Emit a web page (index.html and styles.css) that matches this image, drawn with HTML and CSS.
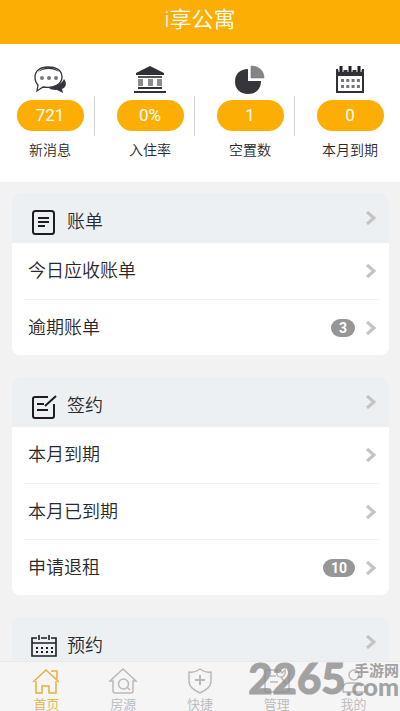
FILE: index.html
```html
<!DOCTYPE html>
<html lang="zh-CN">
<head>
<meta charset="utf-8">
<meta name="viewport" content="width=device-width, initial-scale=1">
<title>i享公寓</title>
<link rel="stylesheet" href="styles.css">
</head>
<body>
<svg class="defs" aria-hidden="true">
  <symbol id="chevron" viewBox="0 0 12 16"><path d="M2 2l7 6-7 6" fill="none" stroke="#c4c4c4" stroke-width="3"/></symbol>
</svg>
<div class="app">
  <header class="topbar"><h1>i享公寓</h1></header>
  <main class="content">
    <section class="stats">
      <a class="stat" href="#messages">
        <svg class="stat-icon" viewBox="0 0 34 30">
          <path d="M31 15c4 5 1 9-2 10l1 4-6-3c-5 0-8-1-10-4 8 1 15-2 17-7z" fill="#35353b"/>
          <path d="M15 3C7 3 2 7 2 13c0 4 1 6 3 8l-1 6 6-4c11 2 19-3 19-10S23 3 15 3z" fill="#fff" stroke="#35353b" stroke-width="1.3"/>
          <path d="M5 8c5-6 17-6 21 0-6-4-15-4-21 0z" fill="#35353b"/>
          <g fill="#77777b"><circle cx="9" cy="14" r="2"/><circle cx="16" cy="14" r="2"/><circle cx="23" cy="14" r="2"/></g>
        </svg>
        <span class="pill">721</span><span class="stat-label">新消息</span>
      </a>
      <a class="stat" href="#occupancy">
        <svg class="stat-icon" viewBox="0 0 34 30">
          <path d="M17 2l14 7v2H3V9zM5 23h24v2H5zM1 27h32v2H1z" fill="#303036"/>
          <path d="M5 12h24v2H5z" fill="#55555a"/>
          <path d="M5 15h5v7H5zM15 15h5v7h-5zM24 15h5v7h-5z" fill="#8b8b8e"/>
        </svg>
        <span class="pill">0%</span><span class="stat-label">入住率</span>
      </a>
      <a class="stat" href="#vacant">
        <svg class="stat-icon" viewBox="0 0 34 30">
          <path d="M15 5v12h13c0 8-5 13-13 13C7 30 2 25 2 17.500S7 5 15 5z" fill="#35353b"/>
          <path d="M18 2c8 0 13 5 13 12H18z" fill="#858587" stroke="#68686b" stroke-width=".5"/>
        </svg>
        <span class="pill">1</span><span class="stat-label">空置数</span>
      </a>
      <a class="stat" href="#due">
        <svg class="stat-icon" viewBox="0 0 34 30">
          <path d="M3 5h28v24H3z" fill="#303036"/><path d="M5 12h24v15H5z" fill="#fff"/>
          <path d="M5 3h24v3H5z" fill="#fff"/>
          <path d="M8 2v6M17 2v6M26 2v6" stroke="#fff" stroke-width="5"/>
          <path d="M8 2v6M17 2v6M26 2v6" stroke="#202025" stroke-width="3"/>
          <path d="M8 16.500h19M8 22.500h19" stroke="#77777b" stroke-width="3" stroke-dasharray="3 2.300"/>
        </svg>
        <span class="pill">0</span><span class="stat-label">本月到期</span>
      </a>
    </section>

    <div class="cards">
      <section class="card">
        <a class="card-head" href="#bills">
          <svg class="head-icon" viewBox="0 0 26 26" fill="none" stroke="#1d1d20" stroke-width="2"><rect x="2" y="2" width="21" height="23" rx="2.500"/><path d="M7 9h11M7 13h11M7 17h7"/></svg>
          <h2>账单</h2>
          <svg class="chevron"><use href="#chevron"/></svg>
        </a>
        <ul class="rows">
          <li><a class="row" href="#today">今日应收账单<svg class="chevron"><use href="#chevron"/></svg></a></li>
          <li><a class="row" href="#overdue">逾期账单<span class="badge">3</span><svg class="chevron"><use href="#chevron"/></svg></a></li>
        </ul>
      </section>
      <section class="card">
        <a class="card-head" href="#contracts">
          <svg class="head-icon" viewBox="0 0 26 26" fill="none" stroke="#1d1d20" stroke-width="2"><path d="M17 4H4Q2 4 2 6v17q0 2 2 2h17q2 0 2-2V11M6 11h7M6 17h11M14 13L25 3"/></svg>
          <h2>签约</h2>
          <svg class="chevron"><use href="#chevron"/></svg>
        </a>
        <ul class="rows">
          <li><a class="row" href="#month-due">本月到期<svg class="chevron"><use href="#chevron"/></svg></a></li>
          <li><a class="row" href="#month-expired">本月已到期<svg class="chevron"><use href="#chevron"/></svg></a></li>
          <li><a class="row" href="#checkout">申请退租<span class="badge">10</span><svg class="chevron"><use href="#chevron"/></svg></a></li>
        </ul>
      </section>
      <section class="card">
        <a class="card-head" href="#bookings">
          <svg class="head-icon" viewBox="0 0 26 26" fill="none" stroke="#1d1d20" stroke-width="1.600"><path d="M6 5H1v18h24V5h-5M10 5h6M1 10h24M8 2v5M18 2v5"/><path d="M5 15h17M5 19h17" stroke-width="2" stroke-dasharray="2 3"/></svg>
          <h2>预约</h2>
          <svg class="chevron"><use href="#chevron"/></svg>
        </a>
      </section>
    </div>
  </main>

  <nav class="tabs">
    <a class="tab active" href="#home"><svg viewBox="0 0 30 28"><path d="M2 15L15 3l13 12M20 4h6v8M5 14v12h6v-7h7v7h7V14"/></svg>首页</a>
    <a class="tab" href="#houses"><svg viewBox="0 0 30 28"><path d="M5 14H2L15 2l13 12h-3v10q0 2-2 2H7q-2 0-2-2z"/><circle cx="15.500" cy="17" r="5"/><path d="M19 20l3 3"/></svg>房源</a>
    <a class="tab" href="#quick"><svg viewBox="0 0 30 28"><path d="M15 2q5 4 11 3v9c0 6-5 9-11 12C9 23 4 20 4 14V5q6 1 11-3z"/><path d="M10 13h10M15 8v10" stroke-width="2"/></svg>快捷</a>
    <a class="tab" href="#manage"><svg viewBox="0 0 30 28"><path d="M16 3H5Q3 3 3 5v18q0 2 2 2h20q2 0 2-2V5q0-2-2-2M8 9h6M8 15h8M15 4c-1 5 1 6 4 6l5 7M18 3l2 3 3-3c1 4-1 6-3 7"/></svg>管理</a>
    <a class="tab" href="#me"><svg viewBox="0 0 30 28"><circle cx="15" cy="8" r="5"/><path d="M4 25v-3q0-6 6-6h10q6 0 6 6v3z"/></svg>我的</a>
  </nav>
  <div class="watermark"><span class="mark-number">2265</span><span class="mark-side"><span class="mark-name">手游网</span><span class="mark-domain">.com</span></span></div>
</div>
</body>
</html>
```
FILE: styles.css
```css
* { box-sizing: border-box; }
body {
  margin: 0;
  background: #f2f2f3;
  color: #29292b;
  font-family: Roboto, "Noto Sans CJK SC", sans-serif;
  font-weight: 350;
}
h1, h2, ul { margin: 0; padding: 0; font-weight: inherit; }
ul { list-style: none; }
a { color: inherit; text-decoration: none; }
.defs { display: none; }
.app {
  position: relative;
  display: flex;
  flex-direction: column;
  height: 100vh;
  overflow: hidden;
}
.topbar {
  flex: none;
  display: flex;
  align-items: center;
  justify-content: center;
  height: 44px;
  padding-bottom: 4px;
  background: #fdae05;
  color: #fff;
}
.topbar h1 { font-size: 22px; line-height: 32px; }
.content { flex: 1; min-height: 0; overflow-y: auto; scrollbar-width: none; }

.stats { display: flex; padding: 20px 0 21px; background: #fff; }
.stat {
  position: relative;
  flex: 1;
  display: flex;
  flex-direction: column;
  align-items: center;
}
.stat + .stat::before {
  content: "";
  position: absolute;
  left: -6px;
  top: 32px;
  width: 1px;
  height: 40px;
  background: #d2d2d2;
}
.stat-icon { width: 34px; height: 30px; margin-bottom: 6px; }
.pill {
  width: 67px;
  height: 31px;
  border-radius: 16px;
  background: #fdae05;
  color: #fff;
  font-size: 17px;
  font-weight: 400;
  line-height: 31px;
  text-align: center;
}
.stat-label { margin-top: 8px; font-size: 14px; line-height: 22px; }

.cards { display: flex; flex-direction: column; gap: 22px; padding: 11px 11px 22px 12px; }
.card { border-radius: 8px; background: #fff; overflow: hidden; }
.card-head {
  display: flex;
  align-items: center;
  height: 50px;
  padding: 0 12px 0 19px;
  background: #edf0f3;
}
.head-icon { width: 26px; height: 26px; margin: 8px 10px 0 0; }
.card-head h2 { margin-top: 8px; font-size: 18px; line-height: 26px; }
.chevron { width: 12px; height: 16px; margin-left: auto; }
.row {
  display: flex;
  align-items: center;
  height: 56px;
  padding: 0 12px 0 16px;
  font-size: 18px;
  line-height: 26px;
}
.rows li + li { margin: 0 10px 0 12px; border-top: 1px solid #f3f3f4; }
.rows li + li .row { height: 55px; padding: 0 2px 0 4px; }
.badge {
  height: 18px;
  margin-left: auto;
  padding: 0 8px;
  border-radius: 9px;
  background: #969696;
  color: #fff;
  font-size: 14px;
  font-weight: 700;
  line-height: 18px;
}
.badge + .chevron { margin-left: 10px; }

.tabs {
  flex: none;
  display: flex;
  height: 50px;
  padding: 5px 8px 0;
  border-top: 1px solid #e9e9ea;
  background: #f5f5f6;
  overflow: hidden;
}
.tab {
  flex: 1;
  display: flex;
  flex-direction: column;
  align-items: center;
  color: #b9b9ba;
  font-size: 13px;
  line-height: 20px;
}
.tab svg {
  flex: none;
  width: 30px;
  height: 28px;
  fill: none;
  stroke: currentColor;
  stroke-width: 1.5;
}
.active { color: #e5b03d; }

.watermark {
  position: absolute;
  right: 1px;
  bottom: 17px;
  display: flex;
  align-items: center;
  color: #8c8c8c;
  opacity: 0.78;
  font-weight: 900;
  pointer-events: none;
}
.mark-number {
  font-family: Lato, sans-serif;
  font-size: 42px;
  line-height: 32px;
  -webkit-text-stroke: 1px currentColor;
}
.mark-side { display: flex; flex-direction: column; align-items: flex-end; }
.mark-name { font-size: 15px; line-height: 16px; font-weight: 700; }
.mark-domain { font-family: Lato, sans-serif; font-size: 25px; line-height: 15px; }
```
